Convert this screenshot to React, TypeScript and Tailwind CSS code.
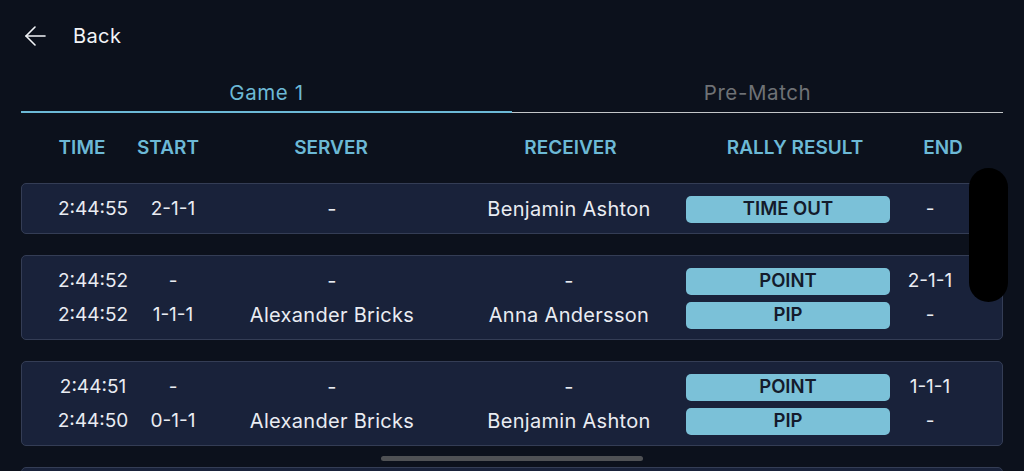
import React from 'react';

type Line = {
    time: string;
    start: string;
    server: string;
    receiver: string;
    result: string;
    end: string;
};

const rallies: Line[][] = [
    [{ time: '2:44:55', start: '2-1-1', server: '-', receiver: 'Benjamin Ashton', result: 'TIME OUT', end: '-' }],
    [
        { time: '2:44:52', start: '-', server: '-', receiver: '-', result: 'POINT', end: '2-1-1' },
        { time: '2:44:52', start: '1-1-1', server: 'Alexander Bricks', receiver: 'Anna Andersson', result: 'PIP', end: '-' },
    ],
    [
        { time: '2:44:51', start: '-', server: '-', receiver: '-', result: 'POINT', end: '1-1-1' },
        { time: '2:44:50', start: '0-1-1', server: 'Alexander Bricks', receiver: 'Benjamin Ashton', result: 'PIP', end: '-' },
    ],
];

const headCols = 'grid grid-cols-[100px_72px_254px_229px_204px_104px] items-center';
const rowCols = 'grid grid-cols-[82px_78px_240px_234px_204px_80px] items-center';

const RallyRow: React.FC<{ line: Line }> = ({ line }) => (
    <div className={`${rowCols} h-[34px] text-[19px] text-[#e9ecf2]`}>
        <span className="text-center">{line.time}</span>
        <span className="text-center">{line.start}</span>
        <span className="text-center text-[20px] tracking-[0.3px]">{line.server}</span>
        <span className="text-center text-[20px] tracking-[0.3px]">{line.receiver}</span>
        <span className="h-[27px] rounded-[5px] bg-[#7bc1d8] text-[#141b2c] font-semibold text-[18.5px] flex items-center justify-center">
            {line.result}
        </span>
        <span className="text-center">{line.end}</span>
    </div>
);

export default function App() {
    return (
        <div
            className="relative h-[471px] w-[1024px] overflow-hidden bg-[#0c111c] px-[21px]"
            style={{ fontFamily: 'Inter, "Noto Sans", sans-serif' }}
        >
            <div className="flex h-[72px] items-center gap-[27px] pl-[4px]">
                <svg width="21" height="20" viewBox="0 0 21 20" fill="none" stroke="#f2f4f7" strokeWidth="1.6" strokeLinecap="round" strokeLinejoin="round">
                    <path d="M20 10H1" />
                    <path d="M10 1L1 10L10 19" />
                </svg>
                <span className="text-[20px] tracking-[0.4px] text-[#f2f4f7]">Back</span>
            </div>

            <div className="flex pt-px">
                <div className="flex-1 border-b-2 border-[#6cb9d6] pt-[8px] pb-[6px] text-center text-[20.5px] tracking-[0.6px] leading-[24px] text-[#6cb9d6]">
                    Game 1
                </div>
                <div className="flex-1 flex flex-col">
                    <div className="pt-[8px] pb-[6px] text-center text-[20.5px] tracking-[0.6px] leading-[24px] text-[#6f7276]">Pre-Match</div>
                    <div className="h-px mt-px bg-[#c4c6c8]" />
                </div>
            </div>

            <div className={`${headCols} h-[70px] pt-px pl-[11px] text-[19px] font-semibold text-[#6cb9d6]`}>
                <span className="text-center">TIME</span>
                <span className="text-center">START</span>
                <span className="text-center">SERVER</span>
                <span className="text-center pr-1">RECEIVER</span>
                <span className="text-center pl-3">RALLY RESULT</span>
                <span className="text-center">END</span>
            </div>

            <div className="flex flex-col gap-[21px]">
                {rallies.map((group, i) => (
                    <div key={i} className="rounded-[5px] border border-[#343d55] bg-[#19223a] pt-[8px] pb-[7px] pl-[30px]">
                        {group.map((line, j) => (
                            <RallyRow key={j} line={line} />
                        ))}
                    </div>
                ))}
                <div className="h-[85px] rounded-[5px] border border-[#343d55] bg-[#19223a]" />
            </div>

            <div className="absolute left-[969px] top-[168px] h-[134px] w-[39px] rounded-full bg-black" />
            <div className="absolute left-[381px] top-[456px] h-[5px] w-[262px] rounded-full bg-[#4f5154]" />
        </div>
    );
}
